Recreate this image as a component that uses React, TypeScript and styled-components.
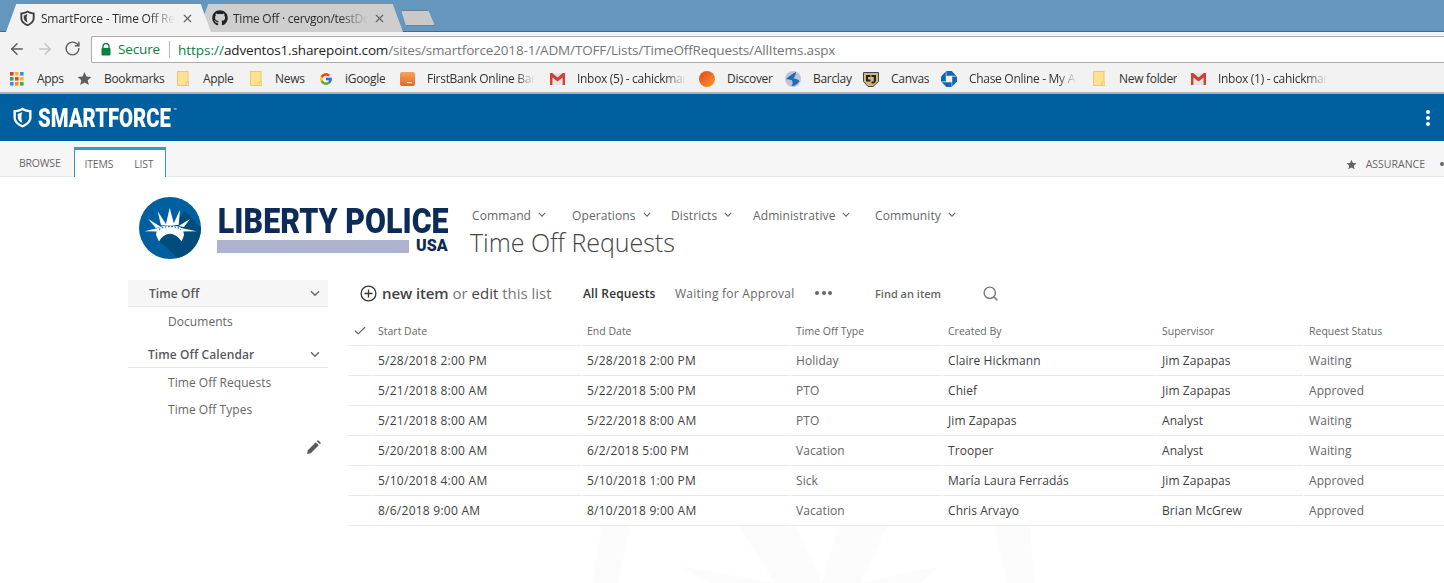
import React from "react";
import styled, { createGlobalStyle } from "styled-components";
import { FaGithub } from "react-icons/fa";
import { FcGoogle } from "react-icons/fc";
import { ArrowLeft, ArrowRight, RotateCw, Search, X, Check } from "lucide-react";

const Global = createGlobalStyle`
  html, body { margin: 0; padding: 0; background: #fff; }
  * { box-sizing: border-box; }
  body { font-family: "Open Sans", "Noto Sans", Arial, sans-serif; }
`;

const Page = styled.div`
  position: relative;
  width: 1444px;
  height: 583px;
  overflow: hidden;
  background: #fff;
  color: #444;
`;

const Watermark = styled.svg`
  position: absolute;
  left: 560px;
  top: 526px;
  width: 500px;
  height: 57px;
`;

/* ---------- browser tabs ---------- */
const TabStrip = styled.div`
  display: flex;
  align-items: flex-start;
  height: 32px;
  padding: 4px 0 0 6px;
  background: #6596be;
  border-bottom: 1px solid #44698c;
`;

const Tab = styled.div<{ $active?: boolean }>`
  position: relative;
  display: flex;
  align-items: center;
  width: 205px;
  height: 28px;
  margin-right: -13px;
  padding: 0 15px 0 14px;
  background: ${(p) => (p.$active ? "#f2f2f2" : "#cecece")};
  clip-path: polygon(0 100%, 5% 0, 95% 0, 100% 100%);
  z-index: ${(p) => (p.$active ? 2 : 1)};
`;

const TabIcon = styled.span`
  display: flex;
  flex: none;
  width: 16px;
  margin-right: 5px;
`;

const TabTitle = styled.span`
  width: 134px;
  flex: none;
  overflow: hidden;
  white-space: nowrap;
  font-size: 12px;
  letter-spacing: -0.25px;
  color: #2d2d2d;
  -webkit-mask-image: linear-gradient(90deg, #000 80%, transparent 100%);
  mask-image: linear-gradient(90deg, #000 80%, transparent 100%);
`;

const TabClose = styled(X)`
  flex: none;
  margin-left: 6px;
  color: #5f5f5f;
`;

const NewTab = styled.div`
  width: 34px;
  height: 16px;
  margin: 6px 0 0 11px;
  background: #c9c9c9;
  border: 1px solid #6e7f90;
  clip-path: polygon(0 0, 80% 0, 100% 100%, 15% 100%);
`;

/* ---------- address bar ---------- */
const Toolbar = styled.div`
  display: flex;
  align-items: flex-start;
  height: 31px;
  padding: 4px 0 0 8px;
  background: #f2f2f2;
`;

const NavButton = styled.span<{ $gap: number; $light?: boolean }>`
  display: flex;
  margin: 4px ${(p) => p.$gap}px 0 0;
  color: ${(p) => (p.$light ? "#c4c4c4" : "#5c5c5c")};
`;

const Omnibox = styled.div`
  display: flex;
  flex: 1;
  align-items: center;
  height: 27px;
  padding-left: 9px;
  margin-left: 2px;
  background: #fff;
  border: 1px solid #ababab;
  border-right: 0;
  border-radius: 2px 0 0 2px;
  white-space: nowrap;
  font-size: 13.5px;
`;

const SecureLabel = styled.span`
  margin-left: 7px;
  padding-right: 9px;
  border-right: 1px solid #b5b5b5;
  line-height: 17px;
  color: #0b8043;
  letter-spacing: -0.15px;
`;

const UrlScheme = styled.span`
  margin-left: 8px;
  color: #0b8043;
`;

const Url = styled.span<{ $dim?: boolean }>`
  color: ${(p) => (p.$dim ? "#757575" : "#222")};
  letter-spacing: -0.15px;
`;

/* ---------- bookmarks ---------- */
const BookmarkBar = styled.div`
  display: flex;
  align-items: center;
  height: 31px;
  padding: 2px 0 0 10px;
  background: #f2f2f2;
  border-bottom: 2px solid #b0b0b0;
`;

const Bookmark = styled.div<{ $width: number }>`
  display: flex;
  flex: none;
  align-items: center;
  width: ${(p) => p.$width}px;
  white-space: nowrap;
  overflow: hidden;
  font-size: 12px;
  letter-spacing: -0.3px;
  color: #333;
`;

const BookmarkIcon = styled.span<{ $width: number }>`
  display: flex;
  flex: none;
  align-items: center;
  width: ${(p) => p.$width}px;
`;

const BookmarkLabel = styled.span<{ $fade?: boolean; $width?: number }>`
  overflow: hidden;
  ${(p) => (p.$width ? `width: ${p.$width}px; flex: none;` : "")}
  ${(p) =>
    p.$fade
      ? `-webkit-mask-image: linear-gradient(90deg, #000 82%, transparent 100%); mask-image: linear-gradient(90deg, #000 82%, transparent 100%);`
      : ""}
`;

/* ---------- suite bar + ribbon ---------- */
const SuiteBar = styled.div`
  display: flex;
  align-items: center;
  justify-content: space-between;
  height: 47px;
  padding: 0 14px 0 13px;
  background: #005f9e;
  color: #fff;
`;

const SuiteBrand = styled.div`
  display: flex;
  align-items: center;
`;

const SuiteName = styled.span`
  display: inline-block;
  margin-left: 6px;
  font-family: Roboto, "Liberation Sans", sans-serif;
  font-weight: 900;
  font-size: 26px;
  line-height: 30px;
  transform: scaleX(0.78);
  transform-origin: left center;
  white-space: nowrap;
`;

const Tm = styled.sup`
  font-size: 7px;
  font-weight: 400;
  margin-left: 3px;
  vertical-align: 14px;
  line-height: 0;
`;

const Dots = styled.div`
  display: flex;
  flex-direction: column;
  gap: 2px;
  span {
    width: 4px;
    height: 4px;
    border-radius: 50%;
    background: #fff;
  }
`;

const Ribbon = styled.div`
  display: flex;
  align-items: flex-end;
  height: 36px;
  padding: 0 0 0 19px;
  background: #f6f6f6;
  border-bottom: 1px solid #eaeaea;
  font-size: 10.5px;
  color: #666;
`;

const RibbonItem = styled.span`
  display: block;
  line-height: 14px;
  padding-bottom: 6px;
  letter-spacing: -0.2px;
`;

const RibbonTabs = styled.div`
  display: flex;
  gap: 21px;
  height: 30px;
  margin: 0 0 -1px 13px;
  padding: 7px 0 0 10px;
  width: 92px;
  background: #fff;
  border: 1px solid #2a9fc9;
  border-top-width: 3px;
  border-bottom: 0;
`;

const RibbonRight = styled.div`
  display: flex;
  align-items: center;
  gap: 9px;
  height: 24px;
  margin: 0 0 0 auto;
`;

const RibbonDot = styled.span`
  width: 4px;
  height: 4px;
  margin-left: 6px;
  border-radius: 50%;
  background: #666;
`;

/* ---------- brand header ---------- */
const Header = styled.header`
  display: flex;
  position: relative;
  height: 103px;
  padding: 20px 0 0 139px;
`;

const Seal = styled.svg`
  flex: none;
  width: 62px;
  height: 62px;
`;

const Wordmark = styled.div`
  flex: none;
  width: 253px;
  margin-left: 16px;
`;

const WordmarkTop = styled.div`
  height: 33px;
  margin-top: 9px;
  padding-left: 1px;
  font-family: Roboto, "Liberation Sans", sans-serif;
  font-weight: 900;
  font-size: 35px;
  line-height: 32px;
  color: #0d2b57;
  white-space: nowrap;
  transform: scaleX(0.868);
  transform-origin: left top;
`;

const WordmarkBottom = styled.div`
  display: flex;
  align-items: center;
  gap: 7px;
  height: 14px;
`;

const WordmarkBar = styled.div`
  width: 192px;
  height: 13px;
  background: #adb2cf;
`;

const WordmarkUsa = styled.span`
  font-family: Roboto, "Liberation Sans", sans-serif;
  font-weight: 900;
  font-size: 16px;
  line-height: 14px;
  color: #0d2b57;
`;

const HeaderRight = styled.div`
  margin-top: 8px;
`;

const TopNav = styled.nav`
  display: flex;
  height: 20px;
  padding-left: 2px;
  align-items: center;
  font-size: 12px;
  color: #666;
`;

const TopNavItem = styled.span<{ $width: number }>`
  display: flex;
  flex: none;
  align-items: center;
  gap: 7px;
  width: ${(p) => p.$width}px;
  white-space: nowrap;
  letter-spacing: 0.1px;
`;

const PageTitle = styled.h1`
  margin: 1px 0 0;
  font-weight: 300;
  font-size: 25px;
  line-height: 32px;
  color: #444;
  white-space: nowrap;
  letter-spacing: -0.03px;
`;

/* ---------- main ---------- */
const Body = styled.div`
  display: flex;
  position: relative;
  padding-left: 128px;
`;

const SideNav = styled.aside`
  flex: none;
  width: 200px;
  font-size: 12px;
  color: #666;
`;

const SideHeading = styled.div<{ $active?: boolean; $indent: number; $top?: number }>`
  display: flex;
  align-items: center;
  justify-content: space-between;
  height: 27px;
  margin-top: ${(p) => p.$top ?? 0}px;
  padding: 0 8px 0 ${(p) => p.$indent}px;
  background: ${(p) => (p.$active ? "#f6f6f6" : "#fff")};
  border-bottom: 1px solid #e8e8e8;
  font-weight: 600;
  letter-spacing: 0.08px;
  color: #5a5a5a;
`;

const SideLink = styled.div<{ $top: number }>`
  height: 18px;
  line-height: 18px;
  margin-top: ${(p) => p.$top}px;
  padding-left: 40px;
  letter-spacing: 0.05px;
`;

const SideEdit = styled.div`
  display: flex;
  justify-content: flex-end;
  margin-top: 21px;
  padding-right: 7px;
`;

const Content = styled.main`
  flex: 1;
  min-width: 0;
  padding-left: 20px;
`;

const CommandBar = styled.div`
  display: flex;
  align-items: center;
  height: 26px;
  margin-bottom: 10px;
  padding-left: 12px;
  font-size: 12px;
  color: #666;
  white-space: nowrap;
`;

const NewItem = styled.span`
  display: flex;
  align-items: center;
  flex: none;
  width: 223px;
  font-size: 15px;
  color: #777;
  svg { margin-right: 5px; }
  b { font-weight: 600; color: #444; letter-spacing: -0.1px; }
  em { font-style: normal; color: #444; }
`;

const ViewLink = styled.span<{ $width: number; $active?: boolean }>`
  flex: none;
  width: ${(p) => p.$width}px;
  font-weight: ${(p) => (p.$active ? 600 : 400)};
  color: ${(p) => (p.$active ? "#333" : "#666")};
  letter-spacing: ${(p) => (p.$active ? 0.15 : 0.25)}px;
`;

const MoreDots = styled.span`
  display: flex;
  flex: none;
  gap: 2.5px;
  width: 60px;
  span {
    width: 4px;
    height: 4px;
    border-radius: 50%;
    background: #666;
  }
`;

const FindBox = styled.span`
  flex: none;
  width: 107px;
  font-weight: 600;
  font-size: 11px;
  color: #666;
`;

const Table = styled.table`
  table-layout: fixed;
  width: 1097px;
  margin-left: -1px;
  border-collapse: separate;
  border-spacing: 1px 0;
  font-size: 12px;
`;

const HeadCell = styled.th`
  height: 30px;
  padding: 0 0 0 5px;
  text-align: left;
  font-weight: 400;
  font-size: 10.5px;
  color: #666;
  border-bottom: 1px solid #eaeaea;
  white-space: nowrap;
`;

const CheckCell = styled(HeadCell)`
  color: #666;
  svg { display: block; }
`;

const Cell = styled.td<{ $muted?: boolean; $date?: boolean }>`
  height: 30px;
  padding: 0 0 0 5px;
  border-bottom: 1px solid #eaeaea;
  color: ${(p) => (p.$muted ? "#666" : "#3f3f3f")};
  white-space: nowrap;
  letter-spacing: ${(p) => (p.$date ? 0.25 : 0.08)}px;
`;

const Shield = ({ size = 16, color = "#444", inner = "#fff" }: { size?: number; color?: string; inner?: string }) => (
  <svg width={size} height={size * 1.1} viewBox="0 0 20 22">
    <path d="M10 0.5C13 2.5 16 3.2 19.5 3.2V11C19.5 16 15 19.5 10 21.5C5 19.5 0.5 16 0.5 11V3.2C4 3.2 7 2.5 10 0.5Z" fill={color} />
    <path d="M10 3.4C12.4 4.8 14.8 5.4 17 5.6V11C17 14.7 13.8 17.4 10 19C6.2 17.4 3 14.7 3 11V5.6C5.2 5.4 7.6 4.8 10 3.4Z" fill={inner} />
    <path d="M10 5C8.8 8 8.2 11.5 10 16.8C6.5 15.4 5 13 5 10.8V7.2C7 7 8.6 6 10 5Z" fill={color} />
  </svg>
);

const Folder = () => (
  <svg width="12" height="15" viewBox="0 0 12 15">
    <rect x="0.5" y="0.5" width="10.5" height="14" fill="#fde293" stroke="#f0c860" />
    <rect x="9" y="11" width="3" height="3.5" fill="#fde293" stroke="#f0c860" />
  </svg>
);

const Gmail = () => (
  <svg width="15" height="12" viewBox="0 0 15 12">
    <rect x="0" y="0" width="15" height="12" fill="#e4e4e4" />
    <path d="M0 0H2.2L7.5 4.6L12.8 0H15V12H12.6V4.4L7.5 8.6L2.4 4.4V12H0Z" fill="#cf4035" />
  </svg>
);

const AppsGrid = () => {
  const c = ["#e53935", "#fbbc05", "#4285f4", "#34a853", "#ea4335", "#fbbc05", "#4285f4", "#fb8c00", "#34a853"];
  return (
    <svg width="14" height="14" viewBox="0 0 14 14">
      {c.map((f, i) => (
        <rect key={i} x={(i % 3) * 5} y={Math.floor(i / 3) * 5} width="3.6" height="3.6" fill={f} />
      ))}
    </svg>
  );
};

const StarIcon = ({ size = 14, color = "#5f5f5f" }: { size?: number; color?: string }) => (
  <svg width={size} height={size} viewBox="0 0 24 24">
    <path d="M12 1.5l3.2 7.2 7.8.8-5.9 5.2 1.8 7.8L12 18.4l-6.9 4.1 1.8-7.8L1 9.5l7.8-.8z" fill={color} />
  </svg>
);

const Chevron = ({ size = 8, color = "#666" }: { size?: number; color?: string }) => (
  <svg width={size} height={size * 0.7} viewBox="0 0 10 7" fill="none">
    <path d="M1 1.2L5 5.2L9 1.2" stroke={color} strokeWidth="1.4" />
  </svg>
);

const FirstBank = () => (
  <svg width="15" height="15" viewBox="0 0 15 15">
    <defs>
      <linearGradient id="fbk" x1="0" y1="0" x2="0" y2="1">
        <stop offset="0" stopColor="#f7a45c" />
        <stop offset="1" stopColor="#e9641c" />
      </linearGradient>
    </defs>
    <rect x="0" y="1" width="15" height="14" rx="2" fill="url(#fbk)" />
    <rect x="7" y="11" width="5" height="1.2" fill="#ffe3c8" />
  </svg>
);

const Discover = () => (
  <svg width="16" height="16" viewBox="0 0 16 16">
    <defs>
      <linearGradient id="dsc" x1="0" y1="0" x2="1" y2="1">
        <stop offset="0" stopColor="#e2471a" />
        <stop offset="1" stopColor="#f79a2c" />
      </linearGradient>
    </defs>
    <circle cx="8" cy="8" r="8" fill="url(#dsc)" />
  </svg>
);

const Barclay = () => (
  <svg width="16" height="16" viewBox="0 0 16 16">
    <circle cx="8" cy="8" r="8" fill="#bfc3de" />
    <path d="M1 8C4 5 7 3 11 1C11 4 9.5 6 8.5 7.5C11 7.5 13 8.5 14.5 10C12 14 9 15.5 6.5 15C8 13 8 11 6.8 9.3C5 8.6 3 8.2 1 8Z" fill="#1f6fb0" />
  </svg>
);

const Colorado = () => (
  <svg width="16" height="16" viewBox="0 0 16 16">
    <path d="M0.5 1.5H15.5V10.5L10 15.5H5L0.5 10.5Z" fill="#cdb97c" stroke="#444" />
    <path d="M3 4H7.5V6H5V8.5H7.5V10.5H3ZM8.5 4H13V10L11 12.5H8.5V10.5H10.8V6H8.5Z" fill="#222" />
  </svg>
);

const Chase = () => (
  <svg width="16" height="16" viewBox="0 0 16 16" fill="#1365b5">
    <path d="M5.4 0H10.6L15.4 4.8H5.4Z" />
    <path d="M16 5.4V10.6L11.2 15.4V5.4Z" />
    <path d="M10.6 16H5.4L0.6 11.2H10.6Z" />
    <path d="M0 10.6V5.4L4.8 0.6V10.6Z" />
  </svg>
);

const SealIcon = () => (
  <Seal viewBox="0 0 62 62">
    <circle cx="31" cy="31" r="31" fill="#005f9e" />
    <path d="M46 14L62 31A31 31 0 0 1 39 61L20 44Z" fill="#024b7d" />
    <g fill="#fff">
      <path d="M30.7 11L35.3 28H26.7Z" />
      <path d="M18.7 14.3L27.7 28.3H22Z" />
      <path d="M9.3 22L22 30L16.7 31Z" />
      <path d="M5.3 34.3L19.3 31V34.5Z" />
      <path d="M41 12.7L39.7 28H34Z" />
      <path d="M51 22L45 30L39.7 29Z" />
      <path d="M57.7 34.3L42 31V34.5Z" />
      <path d="M18 32C24 27 38 27 44 32L45 38L42.7 44.5C39 39 35 37 31 36.7C27 37 23 39 20 44.5L17 38Z" />
    </g>
    <path d="M20 32.5C26 28.5 36 28.5 42 32.5" fill="none" stroke="#005f9e" strokeWidth="1.2" strokeDasharray="1.6 1.6" />
  </Seal>
);

const bookmarks: { w: number; iw: number; icon: React.ReactNode; label: string; fade?: boolean; lw?: number }[] = [
  { w: 67, iw: 27, icon: <AppsGrid />, label: "Apps" },
  { w: 100, iw: 27, icon: <StarIcon size={15} />, label: "Bookmarks" },
  { w: 73, iw: 26, icon: <Folder />, label: "Apple" },
  { w: 69, iw: 25, icon: <Folder />, label: "News" },
  { w: 81, iw: 26, icon: <FcGoogle size={14} />, label: "iGoogle" },
  { w: 150, iw: 27, icon: <FirstBank />, label: "FirstBank Online Ban", fade: true, lw: 108 },
  { w: 149, iw: 27, icon: <Gmail />, label: "Inbox (5) - cahickman", fade: true, lw: 109 },
  { w: 86, iw: 28, icon: <Discover />, label: "Discover" },
  { w: 78, iw: 28, icon: <Barclay />, label: "Barclay" },
  { w: 78, iw: 28, icon: <Colorado />, label: "Canvas" },
  { w: 152, iw: 28, icon: <Chase />, label: "Chase Online - My Acc", fade: true, lw: 108 },
  { w: 98, iw: 26, icon: <Folder />, label: "New folder" },
  { w: 200, iw: 27, icon: <Gmail />, label: "Inbox (1) - cahickman", fade: true, lw: 109 },
];

const navItems: [string, number][] = [
  ["Command", 100],
  ["Operations", 99],
  ["Districts", 82],
  ["Administrative", 122],
  ["Community", 100],
];

const columns = ["Start Date", "End Date", "Time Off Type", "Created By", "Supervisor", "Request Status"];
const colWidths = [24, 208, 208, 151, 213, 146, 140];

const rows = [
  ["5/28/2018 2:00 PM", "5/28/2018 2:00 PM", "Holiday", "Claire Hickmann", "Jim Zapapas", "Waiting"],
  ["5/21/2018 8:00 AM", "5/22/2018 5:00 PM", "PTO", "Chief", "Jim Zapapas", "Approved"],
  ["5/21/2018 8:00 AM", "5/22/2018 8:00 AM", "PTO", "Jim Zapapas", "Analyst", "Waiting"],
  ["5/20/2018 8:00 AM", "6/2/2018 5:00 PM", "Vacation", "Trooper", "Analyst", "Waiting"],
  ["5/10/2018 4:00 AM", "5/10/2018 1:00 PM", "Sick", "María Laura Ferradás", "Jim Zapapas", "Approved"],
  ["8/6/2018 9:00 AM", "8/10/2018 9:00 AM", "Vacation", "Chris Arvayo", "Brian McGrew", "Approved"],
];

export default function App() {
  return (
    <Page>
      <Global />
      <Watermark viewBox="0 0 500 57">
        <g fill="#fcfcfc">
          <path d="M42 0H70L58 57H32Z" />
          <path d="M178 0H235L262 57H215Z" />
          <path d="M278 0H327L300 57H262Z" />
          <path d="M434 0H470L474 57H448Z" />
          <path d="M120 40L215 57H150Z" />
          <path d="M380 40L300 57H360Z" />
        </g>
      </Watermark>

      <TabStrip>
        <Tab $active>
          <TabIcon><Shield size={15} color="#3c4043" inner="#f2f2f2" /></TabIcon>
          <TabTitle>SmartForce - Time Off Requests</TabTitle>
          <TabClose size={13} strokeWidth={2} />
        </Tab>
        <Tab>
          <TabIcon><FaGithub size={16} color="#222" /></TabIcon>
          <TabTitle>Time Off · cervgon/testDocs</TabTitle>
          <TabClose size={13} strokeWidth={2} />
        </Tab>
        <NewTab />
      </TabStrip>

      <Toolbar>
        <NavButton $gap={10}><ArrowLeft size={18} strokeWidth={2} /></NavButton>
        <NavButton $gap={10} $light><ArrowRight size={18} strokeWidth={2} /></NavButton>
        <NavButton $gap={8}><RotateCw size={17} strokeWidth={2} /></NavButton>
        <Omnibox>
          <svg width="10" height="13" viewBox="0 0 10 13">
            <path d="M2 5V3.5a3 3 0 0 1 6 0V5" fill="none" stroke="#0b8043" strokeWidth="1.4" />
            <rect x="0.5" y="5" width="9" height="7.5" rx="0.8" fill="#0b8043" />
          </svg>
          <SecureLabel>Secure</SecureLabel>
          <UrlScheme>https://</UrlScheme>
          <Url>adventos1.sharepoint.com</Url>
          <Url $dim>/sites/smartforce2018-1/ADM/TOFF/Lists/TimeOffRequests/AllItems.aspx</Url>
        </Omnibox>
      </Toolbar>

      <BookmarkBar>
        {bookmarks.map((b) => (
          <Bookmark key={b.label} $width={b.w}>
            <BookmarkIcon $width={b.iw}>{b.icon}</BookmarkIcon>
            <BookmarkLabel $fade={b.fade} $width={b.lw}>{b.label}</BookmarkLabel>
          </Bookmark>
        ))}
      </BookmarkBar>

      <SuiteBar>
        <SuiteBrand>
          <Shield size={19} color="#fff" inner="#005f9e" />
          <SuiteName>SMARTFORCE<Tm>™</Tm></SuiteName>
        </SuiteBrand>
        <Dots><span /><span /><span /></Dots>
      </SuiteBar>

      <Ribbon>
        <RibbonItem>BROWSE</RibbonItem>
        <RibbonTabs>
          <RibbonItem>ITEMS</RibbonItem>
          <RibbonItem>LIST</RibbonItem>
        </RibbonTabs>
        <RibbonRight>
          <StarIcon size={11} color="#666" />
          <span>ASSURANCE</span>
          <RibbonDot />
        </RibbonRight>
      </Ribbon>

      <Header>
        <SealIcon />
        <Wordmark>
          <WordmarkTop>LIBERTY POLICE</WordmarkTop>
          <WordmarkBottom>
            <WordmarkBar />
            <WordmarkUsa>USA</WordmarkUsa>
          </WordmarkBottom>
        </Wordmark>
        <HeaderRight>
          <TopNav>
            {navItems.map(([n, w]) => (
              <TopNavItem key={n} $width={w}>
                {n} <Chevron />
              </TopNavItem>
            ))}
          </TopNav>
          <PageTitle>Time Off Requests</PageTitle>
        </HeaderRight>
      </Header>

      <Body>
        <SideNav>
          <SideHeading $active $indent={21}>
            Time Off <Chevron size={10} />
          </SideHeading>
          <SideLink $top={6}>Documents</SideLink>
          <SideHeading $indent={20} $top={10}>
            Time Off Calendar <Chevron size={10} />
          </SideHeading>
          <SideLink $top={6}>Time Off Requests</SideLink>
          <SideLink $top={9}>Time Off Types</SideLink>
          <SideEdit>
            <svg width="14" height="14" viewBox="0 0 14 14">
              <path d="M0 14L0.8 10.2L8.8 2.2L11.8 5.2L3.8 13.2ZM9.8 1.2L11 0L14 3L12.8 4.2Z" fill="#5c5c5c" />
            </svg>
          </SideEdit>
        </SideNav>

        <Content>
          <CommandBar>
            <NewItem>
              <svg width="17" height="17" viewBox="0 0 17 17" fill="none" stroke="#333" strokeWidth="1.3">
                <circle cx="8.5" cy="8.5" r="7.4" />
                <path d="M8.5 4.5V12.5M4.5 8.5H12.5" />
              </svg>
              <b>new item</b>&nbsp;or&nbsp;<em>edit</em>&nbsp;this list
            </NewItem>
            <ViewLink $active $width={92}>All Requests</ViewLink>
            <ViewLink $width={140}>Waiting for Approval</ViewLink>
            <MoreDots><span /><span /><span /></MoreDots>
            <FindBox>Find an item</FindBox>
            <Search size={17} color="#777" strokeWidth={2} />
          </CommandBar>

          <Table>
            <colgroup>
              {colWidths.map((w, i) => <col key={i} style={{ width: w }} />)}
            </colgroup>
            <thead>
              <tr>
                <CheckCell><Check size={14} strokeWidth={2} /></CheckCell>
                {columns.map((c) => <HeadCell key={c}>{c}</HeadCell>)}
              </tr>
            </thead>
            <tbody>
              {rows.map((r, i) => (
                <tr key={i}>
                  <Cell />
                  {r.map((v, j) => (
                    <Cell key={j} $muted={j === 2 || j === 5} $date={j < 2}>{v}</Cell>
                  ))}
                </tr>
              ))}
            </tbody>
          </Table>
        </Content>
      </Body>
    </Page>
  );
}
